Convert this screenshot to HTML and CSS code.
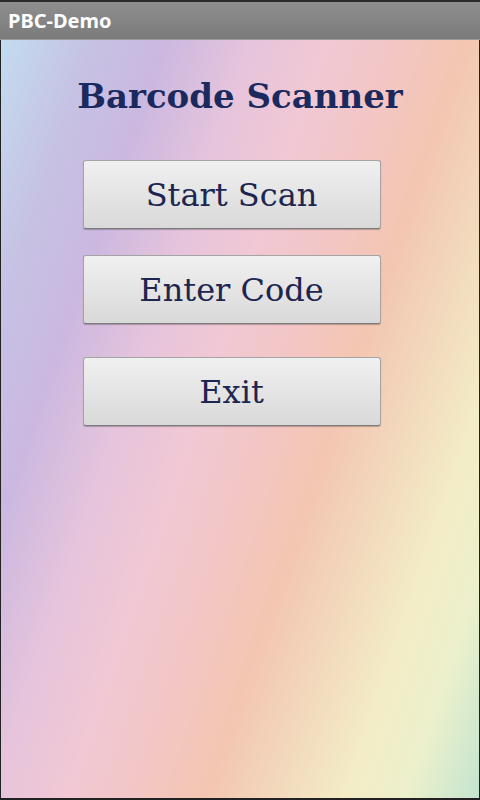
FILE: index.html
```html
<!DOCTYPE html>
<html>
<head>
<meta charset="utf-8">
<link rel="stylesheet" href="styles.css">
</head>
<body>
<div class="screen">
  <header class="titlebar">PBC-Demo</header>
  <main class="content">
    <h1 class="heading">Barcode Scanner</h1>
    <div class="buttons">
      <button class="btn">Start Scan</button>
      <button class="btn">Enter Code</button>
      <button class="btn btn-exit">Exit</button>
    </div>
  </main>
</div>
</body>
</html>
```
FILE: styles.css
```css
html, body {
  margin: 0;
  padding: 0;
  width: 480px;
  height: 800px;
  overflow: hidden;
}
.screen {
  width: 480px;
  height: 800px;
  display: flex;
  flex-direction: column;
  background: #222;
}
.titlebar {
  height: 38px;
  border-top: 2px solid #2a2a2a;
  background: linear-gradient(#8e8e8e, #7a7a7a);
  color: #fff;
  font-family: "Noto Sans", "DejaVu Sans", sans-serif;
  font-weight: bold;
  font-size: 20px;
  line-height: 38px;
  padding-left: 8px;
  box-shadow: inset 0 -1px 0 #9a9a9a;
}
.content {
  flex: 1;
  margin: 0 1px 2px 1px;
  background: linear-gradient(109deg,
    #c3dcee 0%,
    #c6c2e4 12%,
    #cbb8e0 22%,
    #e6c4dc 34%,
    #f1c8d4 44%,
    #f3c6c4 54%,
    #f3c6b2 63%,
    #f2d8bc 72%,
    #f3edc6 82%,
    #ecf0cc 90%,
    #c4e4d0 100%);
  display: flex;
  flex-direction: column;
  align-items: center;
}
.heading {
  margin: 34px 0 0 0;
  font-family: "DejaVu Serif", serif;
  font-weight: bold;
  font-size: 34px;
  line-height: 45px;
  color: #1b2a5e;
}
.buttons {
  margin-top: 41px;
  margin-right: 17px;
  display: flex;
  flex-direction: column;
  gap: 26px;
}
.btn {
  width: 298px;
  height: 69px;
  border: 1px solid #a4a4a4;
  border-bottom-color: #7c7c7c;
  border-radius: 3px;
  background: linear-gradient(#f0f0f0, #d9d9d9);
  box-shadow: 0 1px 1px rgba(0,0,0,0.25);
  font-family: "DejaVu Serif", serif;
  font-size: 32px;
  color: #1c2650;
  padding: 0;
}
.btn-exit {
  margin-top: 7px;
}
```
